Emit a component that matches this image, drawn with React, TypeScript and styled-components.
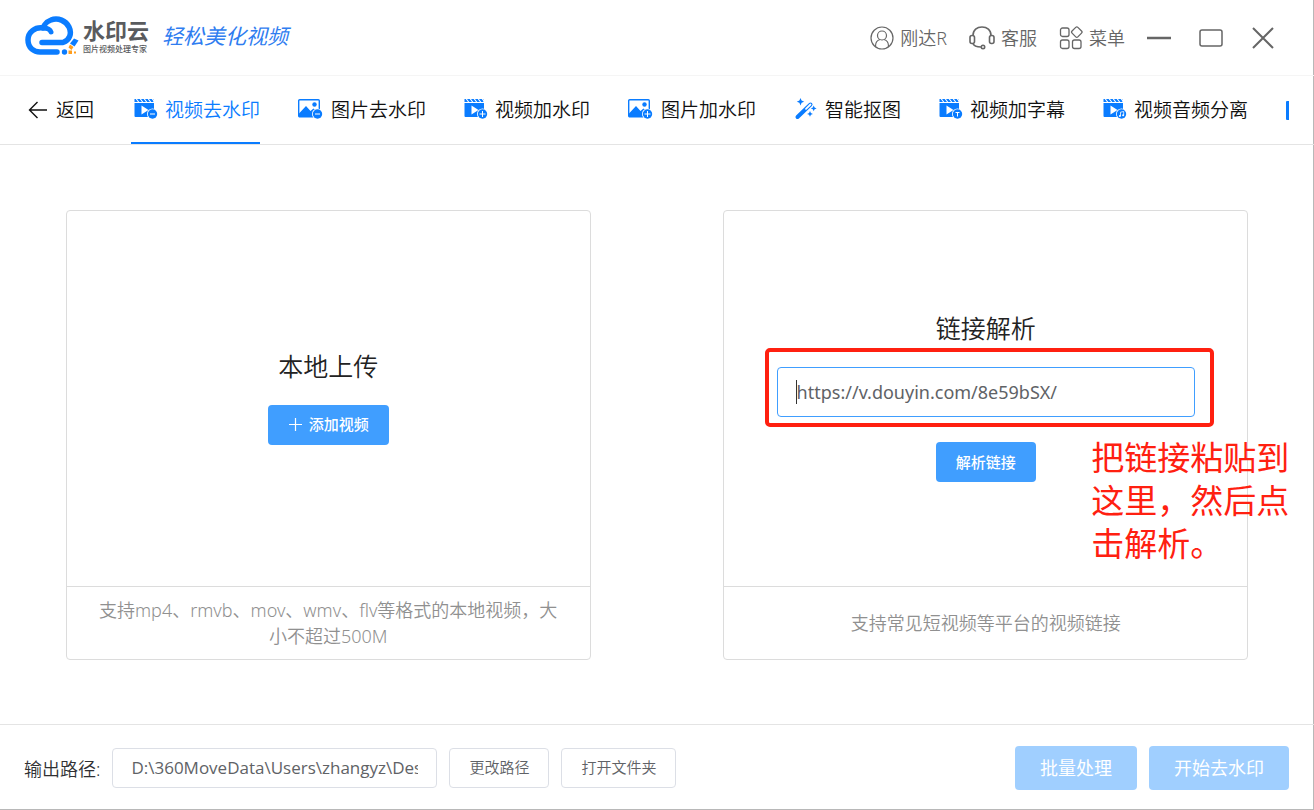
import React from 'react';
import styled, { createGlobalStyle, css } from 'styled-components';

const GlobalStyle = createGlobalStyle`
  * { box-sizing: border-box; }
  html, body, #root { height: 100%; }
  body {
    margin: 0;
    background: #fff;
    font-family: 'Noto Sans', 'Noto Sans CJK SC', sans-serif;
    color: #303133;
  }
  button, input { font-family: inherit; }
  button { cursor: pointer; }
`;

const blue = '#0a7cff';

const Window = styled.div`
  position: relative;
  min-height: 100%;
  display: flex;
  flex-direction: column;
  background: #fff;
  box-shadow: inset -1px -1px 0 #b8b8b8;
  overflow: hidden;
`;

const TitleBar = styled.header`
  display: flex;
  align-items: center;
  justify-content: space-between;
  height: 76px;
  flex: none;
  padding: 0 39px 0 25px;
  border-bottom: 1px solid #f5f5f5;
`;

const Brand = styled.div`
  display: flex;
  align-items: center;
  gap: 4px;
  padding-bottom: 3px;
`;

const BrandText = styled.div`
  display: flex;
  flex-direction: column;
  gap: 1px;
  color: #595b5e;
`;

const BrandName = styled.strong`
  font-size: 22px;
  line-height: 24px;
  font-weight: 700;
`;

const BrandTagline = styled.span`
  font-size: 8px;
  line-height: 12px;
  font-weight: 500;
`;

const Slogan = styled.span`
  margin-left: 9px;
  font-size: 21px;
  line-height: 24px;
  font-style: italic;
  color: #2f7df0;
`;

const TitleActions = styled.div`
  display: flex;
  align-items: center;
  gap: 22px;
`;

const TitleButton = styled.button`
  display: flex;
  align-items: center;
  gap: 6px;
  padding: 0;
  border: 0;
  background: none;
  color: #666;
  font-size: 18px;
  line-height: 26px;
  font-weight: 350;
`;

const WindowControls = styled.div`
  display: flex;
  align-items: center;
  gap: 28px;
`;

const ControlButton = styled.button`
  display: flex;
  padding: 0;
  border: 0;
  background: none;
  color: #666;
`;

const TabBar = styled.nav`
  display: flex;
  flex: none;
  height: 69px;
  padding: 0 25px 0 28px;
  border-bottom: 1px solid #e4e4e4;
`;

const TabList = styled.div`
  display: flex;
  flex: 1;
  min-width: 0;
  gap: 35px;
  overflow: hidden;
`;

const tabBase = css`
  display: flex;
  flex: none;
  align-items: center;
  padding: 0;
  border: 0;
  background: none;
  font-size: 19px;
  line-height: 28px;
  font-weight: 350;
  white-space: nowrap;
`;

const BackButton = styled.button`
  ${tabBase}
  gap: 8px;
  margin-right: 37px;
  color: #111;
`;

const Tab = styled.button<{ $active?: boolean }>`
  ${tabBase}
  gap: 7px;
  padding-left: 3px;
  color: ${(p) => (p.$active ? blue : '#111')};
  border-bottom: 2px solid ${(p) => (p.$active ? blue : 'transparent')};
  border-top: 2px solid transparent;
`;

const Main = styled.main`
  flex: 1;
  display: flex;
  justify-content: space-between;
  align-items: center;
  gap: 10%;
  padding: 64px 5%;
`;

const Card = styled.section`
  flex: 0 1 525px;
  min-width: 0;
  height: 450px;
  display: flex;
  flex-direction: column;
  border: 1px solid #dcdcdc;
  border-radius: 4px;
  position: relative;
`;

const CardBody = styled.div`
  flex: 1;
  display: flex;
  flex-direction: column;
  align-items: center;
  justify-content: center;
  padding-bottom: 4px;
`;

const CardTitle = styled.h2`
  margin: 0 0 21px;
  font-size: 25px;
  line-height: 36px;
  font-weight: 350;
  color: #222;
`;

const CardHint = styled.p`
  display: flex;
  align-items: center;
  justify-content: center;
  height: 73px;
  margin: 0;
  padding: 0 24px;
  border-top: 1px solid #dcdcdc;
  font-size: 18px;
  line-height: 26px;
  font-weight: 350;
  text-align: center;
  color: #909090;
`;

const PrimaryButton = styled.button`
  display: flex;
  align-items: center;
  gap: 5px;
  height: 40px;
  padding: 0 20px 2px;
  border: 0;
  border-radius: 4px;
  background: #409eff;
  color: #fff;
  font-size: 15px;
  font-weight: 500;
`;

const LinkRow = styled.div`
  position: relative;
  width: 80%;
  margin-bottom: 25px;
`;

const LinkInput = styled.input`
  display: block;
  width: 100%;
  height: 50px;
  padding: 0 19px;
  border: 1px solid #409eff;
  border-radius: 4px;
  outline: 0;
  font-size: 18px;
  color: #606266;
`;

const Highlight = styled.div`
  position: absolute;
  inset: -19px -19px -10px -12px;
  border: 4px solid #ff2010;
  border-radius: 5px;
  pointer-events: none;
`;

const Caret = styled.span`
  position: absolute;
  left: 19px;
  top: 13px;
  width: 1px;
  height: 24px;
  background: #333;
`;

const Note = styled.p`
  position: absolute;
  top: 225px;
  right: -44px;
  width: 200px;
  margin: 0;
  font-size: 33px;
  line-height: 43px;
  color: #ff2010;
`;

const Footer = styled.footer`
  display: flex;
  align-items: center;
  flex: none;
  height: 86px;
  padding: 0 25px 0 24px;
  gap: 12px;
  border-top: 1px solid #e4e4e4;
`;

const PathLabel = styled.label`
  font-size: 18px;
  font-weight: 350;
  white-space: nowrap;
`;

const PathInput = styled.input`
  width: 325px;
  height: 40px;
  padding: 0 18px;
  border: 1px solid #dcdfe6;
  border-radius: 4px;
  font-family: 'Open Sans', 'Noto Sans CJK SC', sans-serif;
  font-size: 17px;
  color: #606266;
`;

const PlainButton = styled.button`
  height: 40px;
  padding: 0 19px 2px;
  border: 1px solid #dcdfe6;
  border-radius: 4px;
  background: #fff;
  color: #606266;
  font-size: 15px;
  font-weight: 350;
  white-space: nowrap;
`;

const RunButtons = styled.div`
  display: flex;
  gap: 12px;
  margin-left: auto;
`;

const RunButton = styled.button`
  height: 44px;
  padding: 0 25px 2px;
  border: 0;
  border-radius: 4px;
  background: #a0cfff;
  color: #fff;
  font-size: 18px;
  white-space: nowrap;
`;

const Logo = () => (
  <svg width="54" height="40" viewBox="0 0 54 40" fill="none" aria-hidden="true">
    <path d="M17 26.500H38C45 24 47 17 44 11C41 5 33 1 26 4C20 6 18 12 18 12C10 11 3 16 3 24C3 32 9 36 15 36H32" stroke={blue} strokeWidth="5.500" strokeLinecap="round" strokeLinejoin="round" />
    <path d="M18 12C22 12 25 13 26 16" stroke={blue} strokeWidth="5" strokeLinecap="round" />
    <circle cx="39.500" cy="36" r="2.700" fill={blue} />
    <path d="M49 22.500L53.500 24.500L49.500 30.500L45 27.500Z" fill={blue} />
    <path d="M45 28.500L48.500 31L46.500 34L43.500 31.500Z" fill="#ff9d1c" />
    <path d="M43.500 34.500H47V38H43.500ZM49 35.500H51V37.500H49Z" fill="#ff9d1c" />
  </svg>
);

type Badge = 'minus' | 'plus' | 'text' | 'music';

const BadgeMark = ({ kind }: { kind: Badge }) => (
  <>
    <circle cx="18.500" cy="16" r="5.500" fill="#fff" />
    <circle cx="18.500" cy="16" r="4.700" fill={blue} />
    {kind === 'minus' && <path d="M16 16h5" stroke="#fff" />}
    {kind === 'plus' && <path d="M15.500 16h6M18.500 13v6" stroke="#fff" />}
    {kind === 'text' && <path d="M16.500 14.500h4M18.500 14.500v4" stroke="#fff" />}
    {kind === 'music' && (
      <>
        <path d="M17.500 18v-3.800l3.200-.7v3.800" stroke="#fff" strokeWidth=".8" />
        <circle cx="16.900" cy="18" r="1" fill="#fff" />
        <circle cx="20.100" cy="17.300" r="1" fill="#fff" />
      </>
    )}
  </>
);

const VideoIcon = ({ badge }: { badge: Badge }) => (
  <svg width="24" height="24" viewBox="0 0 24 24" fill="none" aria-hidden="true">
    <path d="M.5 1H19.500V4H.500ZM.5 5H20V19H1.500Q.500 19 .500 18Z" fill={blue} />
    <path d="M2 .500L5 4.500M6 .500L9 4.500M10 .500L13 4.500M14 .500L17 4.500M18 .500L21 4.500" stroke="#fff" strokeWidth="1.100" />
    <path d="M7.500 7.500L14.500 12L7.500 16.500Z" fill="#fff" />
    <BadgeMark kind={badge} />
  </svg>
);

const ImageIcon = ({ badge }: { badge: Badge }) => (
  <svg width="26" height="24" viewBox="0 0 26 24" fill="none" aria-hidden="true">
    <rect x=".7" y="1.700" width="20.600" height="17" rx="1" stroke={blue} strokeWidth="1.400" />
    <path d="M1 15.500L8 8L12.500 13L15.500 10.500L21 15V18.500H1Z" fill={blue} />
    <circle cx="16.500" cy="6.500" r="2.200" fill={blue} />
    <g transform="translate(1 0)"><BadgeMark kind={badge} /></g>
  </svg>
);

const WandIcon = () => (
  <svg width="24" height="24" viewBox="-1 0 24 24" fill="none" aria-hidden="true">
    <path d="M2.500 19L15.500 6.500" stroke={blue} strokeWidth="4" strokeLinecap="round" />
    <path d="M11 10.800L15.500 6.500" stroke="#fff" strokeWidth="1.800" strokeLinecap="round" />
    <path d="M5.500 0l1.100 2.600L9.200 3.700 6.600 4.800 5.500 7.400 4.400 4.800 1.800 3.700 4.400 2.600ZM18.700 7.500l.9 2 2 .9-2 .9-.9 2-.9-2-2-.9 2-.9ZM15 13l.9 2 2 .9-2 .9-.9 2-.9-2-2-.9 2-.9Z" fill={blue} />
  </svg>
);

const PageIcon = () => (
  <svg width="22" height="24" viewBox="0 0 22 24" aria-hidden="true">
    <rect x="0" y="3" width="20" height="19" rx="1" fill={blue} />
  </svg>
);

const tabs = [
  { label: '视频去水印', icon: <VideoIcon badge="minus" />, active: true },
  { label: '图片去水印', icon: <ImageIcon badge="minus" /> },
  { label: '视频加水印', icon: <VideoIcon badge="plus" /> },
  { label: '图片加水印', icon: <ImageIcon badge="plus" /> },
  { label: '智能抠图', icon: <WandIcon /> },
  { label: '视频加字幕', icon: <VideoIcon badge="text" /> },
  { label: '视频音频分离', icon: <VideoIcon badge="music" /> },
];

export default function App() {
  return (
    <>
      <GlobalStyle />
      <Window>
        <TitleBar>
          <Brand>
            <Logo />
            <BrandText>
              <BrandName>水印云</BrandName>
              <BrandTagline>图片视频处理专家</BrandTagline>
            </BrandText>
            <Slogan>轻松美化视频</Slogan>
          </Brand>
          <TitleActions>
            <TitleButton>
              <svg width="24" height="24" viewBox="0 0 24 24" fill="none" stroke="currentColor" strokeWidth="1.200" aria-hidden="true">
                <circle cx="12" cy="12" r="11" />
                <circle cx="12" cy="9.500" r="4.500" />
                <path d="M5.500 20c0-4 2.500-6 4.500-6.500M18.500 20c0-4-2.500-6-4.500-6.500" />
              </svg>
              刚达R
            </TitleButton>
            <TitleButton>
              <svg width="26" height="24" viewBox="0 0 26 24" fill="none" stroke="currentColor" strokeWidth="1.600" aria-hidden="true">
                <path d="M4 9.500C4 4 8 1 13 1s9 3 9 8.500" />
                <rect x="1" y="9.500" width="4.500" height="8" rx="2" />
                <rect x="20.500" y="9.500" width="4.500" height="8" rx="2" />
                <path d="M4 17.500c1 3 4 3.500 8 3.500" />
                <circle cx="14" cy="21" r="1.700" />
              </svg>
              客服
            </TitleButton>
            <TitleButton>
              <svg width="24" height="24" viewBox="0 0 24 24" fill="none" stroke="currentColor" strokeWidth="1.300" aria-hidden="true">
                <rect x="1.500" y="2" width="8.500" height="8.500" rx="2" />
                <rect x="1.500" y="14" width="8.500" height="8.500" rx="2" />
                <rect x="13.500" y="14" width="8.500" height="8.500" rx="2" />
                <rect x="13.700" y="2" width="8.200" height="8.200" rx="1.500" transform="rotate(45 17.800 6.100)" />
              </svg>
              菜单
            </TitleButton>
            <WindowControls>
              <ControlButton aria-label="最小化">
                <svg width="24" height="24" viewBox="0 0 24 24" stroke="currentColor" strokeWidth="2.500"><path d="M0 12h24" /></svg>
              </ControlButton>
              <ControlButton aria-label="最大化">
                <svg width="24" height="24" viewBox="0 0 24 24" fill="none" stroke="currentColor" strokeWidth="1.500"><rect x="1" y="4" width="22" height="16" rx="2" /></svg>
              </ControlButton>
              <ControlButton aria-label="关闭">
                <svg width="24" height="24" viewBox="0 0 24 24" stroke="currentColor" strokeWidth="2"><path d="M2 2l20 20M22 2L2 22" /></svg>
              </ControlButton>
            </WindowControls>
          </TitleActions>
        </TitleBar>

        <TabBar>
          <BackButton>
            <svg width="20" height="18" viewBox="0 0 20 18" fill="none" stroke="currentColor" strokeWidth="1.400" aria-hidden="true">
              <path d="M19 9H1.500M9.500 1L1.500 9l8 8" />
            </svg>
            返回
          </BackButton>
          <TabList>
            {tabs.map((t) => (
              <Tab key={t.label} $active={t.active}>
                {t.icon}
                {t.label}
              </Tab>
            ))}
            <Tab aria-label="更多工具">
              <PageIcon />
            </Tab>
          </TabList>
        </TabBar>

        <Main>
          <Card>
            <CardBody>
              <CardTitle>本地上传</CardTitle>
              <PrimaryButton>
                <svg width="16" height="16" viewBox="0 0 16 16" stroke="currentColor" strokeWidth="1.200" aria-hidden="true"><path d="M1 8.500h13M7.500 2v13" /></svg>
                添加视频
              </PrimaryButton>
            </CardBody>
            <CardHint>支持mp4、rmvb、mov、wmv、flv等格式的本地视频，大小不超过500M</CardHint>
          </Card>
          <Card>
            <CardBody>
              <CardTitle>链接解析</CardTitle>
              <LinkRow>
                <LinkInput aria-label="视频链接" defaultValue="https://v.douyin.com/8e59bSX/" />
                <Caret />
                <Highlight />
              </LinkRow>
              <PrimaryButton>解析链接</PrimaryButton>
            </CardBody>
            <CardHint>支持常见短视频等平台的视频链接</CardHint>
            <Note>把链接粘贴到这里，然后点击解析。</Note>
          </Card>
        </Main>

        <Footer>
          <PathLabel htmlFor="output-path">输出路径:</PathLabel>
          <PathInput id="output-path" defaultValue="D:\360MoveData\Users\zhangyz\Desktop" />
          <PlainButton>更改路径</PlainButton>
          <PlainButton>打开文件夹</PlainButton>
          <RunButtons>
            <RunButton>批量处理</RunButton>
            <RunButton>开始去水印</RunButton>
          </RunButtons>
        </Footer>
      </Window>
    </>
  );
}
